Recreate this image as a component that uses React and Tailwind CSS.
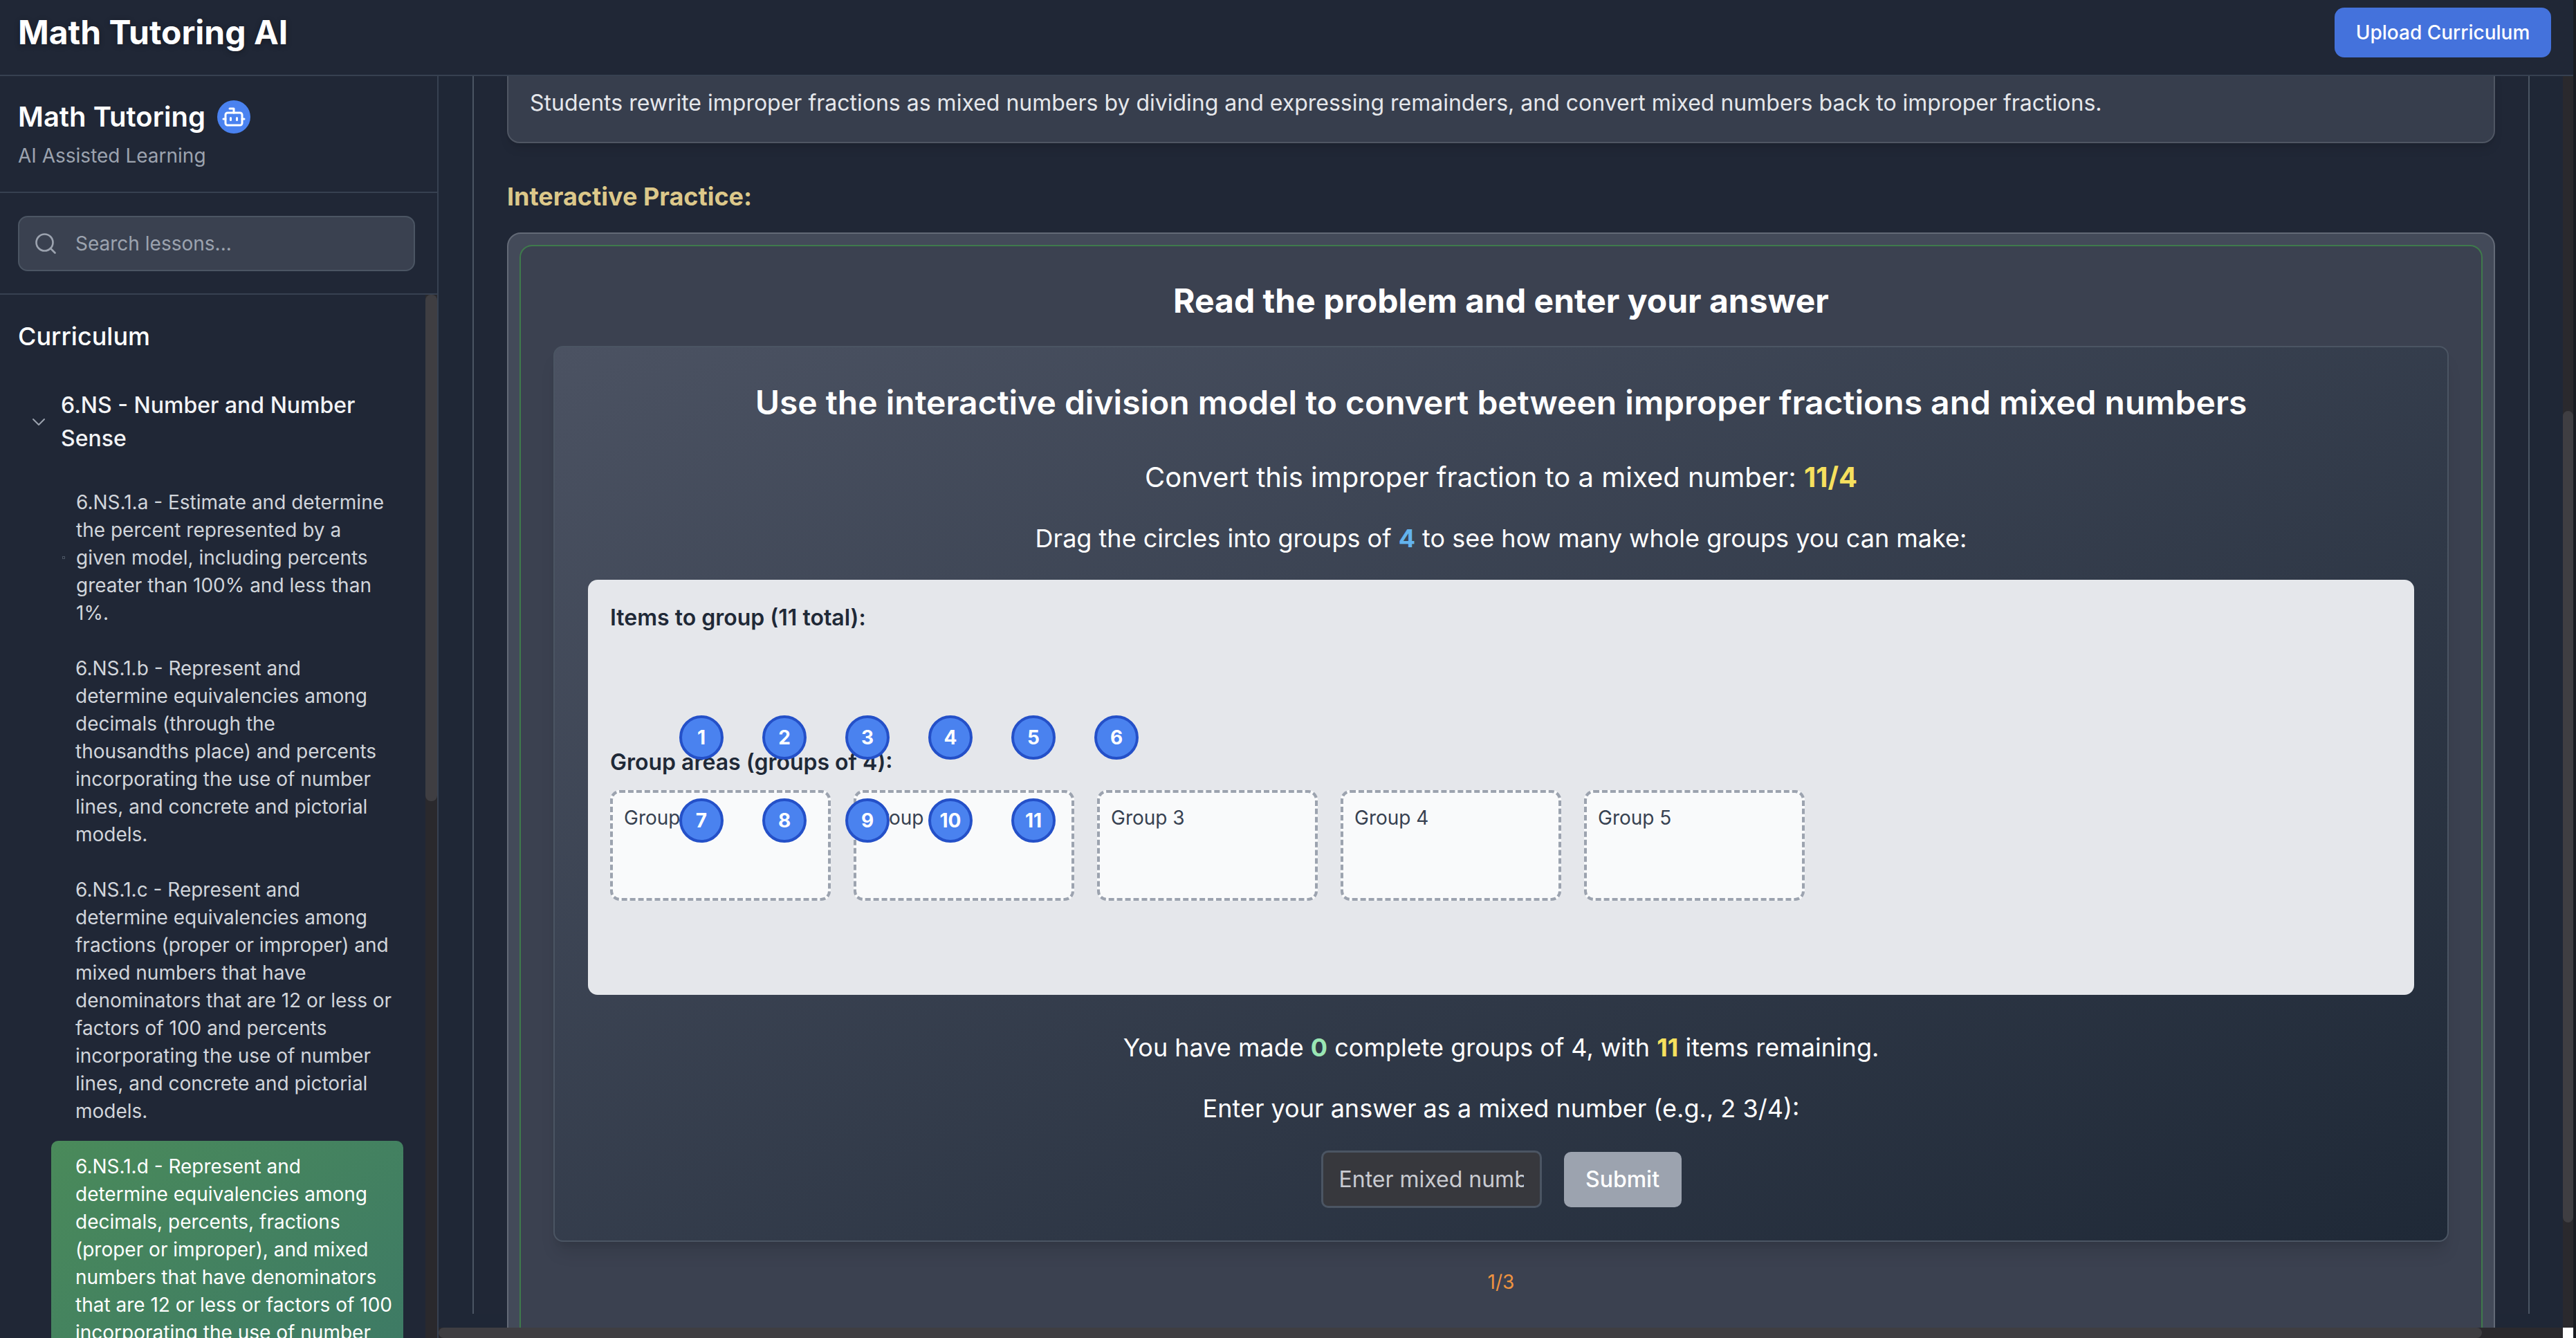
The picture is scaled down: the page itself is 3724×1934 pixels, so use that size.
import React from "react";
import { Bot, Search, ChevronDown } from "lucide-react";

const items = [
  "6.NS.1.a - Estimate and determine the percent represented by a given model, including percents greater than 100% and less than 1%.",
  "6.NS.1.b - Represent and determine equivalencies among decimals (through the thousandths place) and percents incorporating the use of number lines, and concrete and pictorial models.",
  "6.NS.1.c - Represent and determine equivalencies among fractions (proper or improper) and mixed numbers that have denominators that are 12 or less or factors of 100 and percents incorporating the use of number lines, and concrete and pictorial models.",
];
const activeItem =
  "6.NS.1.d - Represent and determine equivalencies among decimals, percents, fractions (proper or improper), and mixed numbers that have denominators that are 12 or less or factors of 100 incorporating the use of number lines, and concrete and pictorial models.";

export default function App() {
  return (
    <div className="w-[3724px] h-[1934px] overflow-hidden flex bg-[#1a1c22] text-white font-['Inter',sans-serif]">
      <div className="w-[3720px] shrink-0 h-full flex flex-col">
        <header className="h-[110px] shrink-0 flex items-center justify-between pl-[26px] pr-[32px] pb-[2px] border-b-2 border-[#374151] bg-[#202736]">
          <h1 className="text-[48px] leading-[56px] font-bold -mt-[12px] [text-shadow:0_2px_8px_rgba(0,0,0,0.3)]">Math Tutoring AI</h1>
          <button className="w-[313px] h-[72px] -mt-[12px] rounded-[14px] bg-[#4472dc] text-[28px] font-medium">Upload Curriculum</button>
        </header>

        <div className="flex-1 min-h-0 flex">
          <aside className="w-[634px] shrink-0 flex flex-col border-r-2 border-[#374151] bg-[#202736]">
            <div className="h-[169px] shrink-0 border-b-2 border-[#374151] pl-[26px] pt-[35px]">
              <div className="flex items-center h-[48px] gap-[17px]">
                <span className="text-[40px] leading-[48px] font-semibold">Math Tutoring</span>
                <span className="w-[48px] h-[48px] rounded-full bg-[#4a82f0] flex items-center justify-center">
                  <Bot size={36} strokeWidth={2} />
                </span>
              </div>
              <p className="mt-[14px] text-[28px] leading-[36px] text-[#9ca3af]">AI Assisted Learning</p>
            </div>
            <div className="h-[147px] shrink-0 border-b-2 border-[#374151] pl-[26px] pr-[32px] pt-[33px]">
              <div className="h-[80px] rounded-[14px] bg-[#3a4150] border-2 border-[#4b5563] flex items-center pl-[20px] gap-[25px]">
                <Search size={36} strokeWidth={1.75} className="text-[#9ca3af]" />
                <input className="flex-1 bg-transparent outline-none text-[28px] placeholder:text-[#9ca3af]" placeholder="Search lessons..." />
              </div>
            </div>
            <div className="flex-1 min-h-0 flex">
              <div className="flex-1 min-w-0 overflow-hidden pl-[26px] pt-[36px]">
                <h2 className="text-[36px] leading-[48px] font-medium">Curriculum</h2>
                <div className="mt-[52px] flex gap-[16px] items-center pr-[10px]">
                  <ChevronDown size={32} strokeWidth={1.5} className="text-[#9ca3af] shrink-0 ml-[14px]" />
                  <div className="text-[32px] leading-[48px] font-medium text-[#f3f4f6]">6.NS - Number and Number Sense</div>
                </div>
                <div className="mt-[31px] ml-[48px] mr-[32px] flex flex-col gap-[6px]">
                  {items.map((t, i) => (
                    <div key={i} className={`relative py-[17px] pr-[16px] text-[28px] leading-[40px] text-[#d1d5db] ${i === 0 ? "pl-[36px]" : "pl-[35px]"}`}>
                      {i === 0 && <span className="absolute left-[16px] top-1/2 -mt-[2px] w-[4px] h-[4px] border border-[#4b5563]" />}
                      {t}
                    </div>
                  ))}
                  <div className="relative py-[17px] pl-[35px] pr-[12px] text-[28px] leading-[40px] text-white rounded-[10px] bg-gradient-to-br from-[#4a8a5a] to-[#3c7866]">
                    {activeItem}
                  </div>
                </div>
              </div>
              <div className="w-[17px] shrink-0 bg-[#2a292d]">
                <div className="h-[732px] rounded-[8px] bg-[#3f3e42]" />
              </div>
            </div>
          </aside>

          <div className="flex-1 min-w-0 flex flex-col">
            <div className="flex-1 min-h-0 flex">
              <main className="flex-1 min-w-0 overflow-hidden pl-[49px] pr-[48px] bg-[#1f2736]">
                <div className="h-full border-x-2 border-[#4b5563] px-[48px] bg-[#202736]">
                  <section className="-mt-[20px] h-[117px] rounded-[18px] border-2 border-[#4f5663] bg-[#373e4d] pl-[31px] pt-[36px] shadow-lg">
                    <p className="text-[32px] leading-[42px] text-[#e5e7eb]">
                      Students rewrite improper fractions as mixed numbers by dividing and expressing remainders, and convert mixed numbers back to improper fractions.
                    </p>
                  </section>
                  <h3 className="mt-[54px] text-[36px] leading-[46px] font-bold text-[#dcc88a]">Interactive Practice:</h3>
                  <section className="mt-[29px] rounded-[20px] border-2 border-[#636a77] bg-[#434a59] px-[16px] pt-[16px]">
                    <div className="rounded-[18px] border-2 border-[#3f7a4c] bg-[#3b4150] px-[47px] pt-[50px] h-[1700px]">
                      <h2 className="text-center text-[48px] leading-[58px] font-bold">Read the problem and enter your answer</h2>
                      <div className="mt-[36px] rounded-[14px] border-2 border-[#4b5563] bg-gradient-to-br from-[#4b5262] to-[#1f2937] px-[48px] pt-[49px] h-[1295px] shadow-xl">
                        <h2 className="text-center text-[48px] leading-[62px] font-semibold">Use the interactive division model to convert between improper fractions and mixed numbers</h2>
                        <p className="mt-[51px] text-center text-[40px] leading-[52px]">
                          Convert this improper fraction to a mixed number: <span className="font-bold text-[#f6e05e]">11/4</span>
                        </p>
                        <p className="mt-[39px] text-center text-[36px] leading-[46px]">
                          Drag the circles into groups of <span className="font-bold text-[#63b3ed]">4</span> to see how many whole groups you can make:
                        </p>
                        <div className="relative mt-[37px] h-[600px] rounded-[14px] bg-[#e5e7eb] pl-[32px] pt-[35px] text-[#1f2937]">
                          <p className="text-[32px] leading-[40px] font-semibold">Items to group (11 total):</p>
                          <p className="mt-[169px] text-[32px] leading-[40px] font-semibold">Group areas (groups of 4):</p>
                          <div className="mt-[20px] flex gap-[33px]">
                            {[1, 2, 3, 4, 5].map((n) => (
                              <div key={n} className="w-[319px] h-[160px] rounded-[14px] border-4 border-dashed border-[#9ca3af] bg-[#f9fafb] px-[16px] pt-[18px] text-[28px] leading-[36px] text-[#374151]">
                                Group {n}
                              </div>
                            ))}
                          </div>
                          <div className="absolute left-[132px] top-[196px] grid grid-cols-[repeat(6,64px)] gap-[56px]">
                            {[1, 2, 3, 4, 5, 6, 7, 8, 9, 10, 11].map((n) => (
                              <div key={n} className="w-[64px] h-[64px] rounded-full border-[4px] border-[#2450c8] bg-[#4a82ef] flex items-center justify-center text-[28px] font-bold text-white">
                                {n}
                              </div>
                            ))}
                          </div>
                        </div>
                        <p className="mt-[53px] text-center text-[36px] leading-[46px]">
                          You have made <span className="font-bold text-[#9ae6b4]">0</span> complete groups of 4, with <span className="font-bold text-[#f6e05e]">11</span> items remaining.
                        </p>
                        <p className="mt-[42px] text-center text-[36px] leading-[46px]">Enter your answer as a mixed number (e.g., 2 3/4):</p>
                        <div className="mt-[38px] flex justify-center items-center gap-[32px]">
                          <input className="w-[319px] h-[83px] rounded-[10px] border-[3px] border-[#4b5563] bg-[#37383d] px-[23px] text-[32px] outline-none placeholder:text-[#c9cbd1]" placeholder="Enter mixed number" />
                          <button className="w-[170px] h-[80px] rounded-[10px] bg-[#9ca3af] text-[32px] font-medium">Submit</button>
                        </div>
                      </div>
                      <p className="mt-[41px] text-center text-[28px] leading-[34px] text-[#ee9340]">1/3</p>
                    </div>
                  </section>
                </div>
              </main>
              <div className="w-[15px] shrink-0 bg-[#2a292d]">
                <div className="mt-[484px] h-[1173px] rounded-[8px] bg-[#3f3e42]" />
              </div>
            </div>
            <div className="h-[15px] shrink-0 flex">
              <div className="flex-1 bg-[#2a292d]">
                <div className="w-[2954px] h-full rounded-[8px] bg-[#3f3e42]" />
              </div>
              <div className="w-[15px] bg-white" />
            </div>
          </div>
        </div>
      </div>
      <div className="flex-1 bg-[#1a1c22]" />
    </div>
  );
}
